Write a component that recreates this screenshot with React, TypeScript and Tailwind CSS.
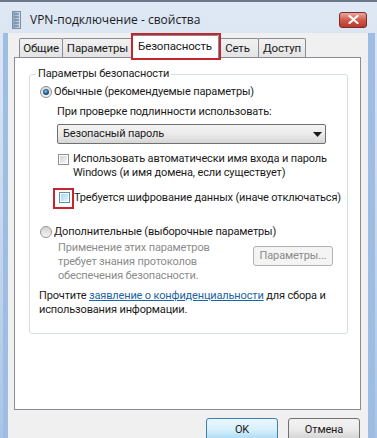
import React from "react";

const font = "font-['Roboto',sans-serif]";

const RadioOn = () => (
  <svg width="12" height="12" viewBox="0 0 12 12">
    <defs>
      <linearGradient id="ro" x1="0" y1="0" x2="0" y2="1">
        <stop offset="0" stopColor="#d9d9d9" />
        <stop offset="1" stopColor="#f7f7f7" />
      </linearGradient>
      <radialGradient id="rd" cx="45%" cy="40%" r="60%">
        <stop offset="0" stopColor="#9fd3f2" />
        <stop offset="0.5" stopColor="#2f72a8" />
        <stop offset="1" stopColor="#163e63" />
      </radialGradient>
    </defs>
    <circle cx="6" cy="6" r="5.5" fill="url(#ro)" stroke="#8d8d8d" />
    <circle cx="6" cy="6" r="3" fill="url(#rd)" />
  </svg>
);

const RadioOff = () => (
  <svg width="12" height="12" viewBox="0 0 12 12">
    <defs>
      <linearGradient id="rf" x1="0" y1="0" x2="0" y2="1">
        <stop offset="0" stopColor="#cfcfcf" />
        <stop offset="1" stopColor="#f6f6f6" />
      </linearGradient>
    </defs>
    <circle cx="6" cy="6" r="5.5" fill="url(#rf)" stroke="#979797" />
  </svg>
);

const Check = ({ hot }: { hot?: boolean }) => (
  <div className={`w-[11px] h-[11px] border p-[1px] bg-white ${hot ? "border-[#5d8fb6]" : "border-[#8f8f8f]"}`}>
    <div className={`w-full h-full bg-linear-to-br ${hot ? "from-[#a9d9f2] to-[#dff3fc]" : "from-[#d3d3d3] to-[#f8f8f8]"}`} />
  </div>
);

const Tab = ({ label, w, first }: { label: string; w: string; first?: boolean }) => (
  <div className={`${w} ${first ? "" : "-ml-px"} h-[19px] flex items-center justify-center border border-b-0 border-[#898c95] bg-linear-to-b from-[#f2f2f2] to-[#e3e3e3] rounded-t-[2px]`}>
    {label}
  </div>
);

export default function App() {
  return (
    <div className={`w-[377px] h-[438px] overflow-hidden flex flex-col bg-linear-to-b from-[#dfe8f4] via-[#c8d9ee] to-[#a9c4e6] border-t-2 border-[#6b7a8a] text-[11px] tracking-[-0.15px] leading-[14px] text-[#1a1a1a] whitespace-nowrap ${font}`}>
      {/* title bar */}
      <div className="h-[31px] shrink-0 flex items-center pl-[12px] pr-[10px] pt-[4px]">
        <svg width="9" height="18" viewBox="0 0 9 18">
          <defs>
            <linearGradient id="ic" x1="0" y1="0" x2="1" y2="0">
              <stop offset="0" stopColor="#8aa3bd" />
              <stop offset="1" stopColor="#d7e2ee" />
            </linearGradient>
          </defs>
          <rect x="0.5" y="0.5" width="8" height="17" fill="url(#ic)" stroke="#7b8fa6" />
          <path d="M2 3h5M2 6h5M2 9h5M2 12h5M2 15h5" stroke="#5b7391" strokeWidth="1" />
        </svg>
        <span className="ml-[9px] text-[12px] tracking-normal text-[#1b1b1b] font-['Open_Sans',sans-serif]">VPN-подключение - свойства</span>
        <div className="ml-auto w-[28px] h-[16px] rounded-[3px] border border-[#7a2e27] bg-linear-to-b from-[#e7a99f] via-[#cf5a4c] to-[#b93a2d] flex items-center justify-center">
          <svg width="11" height="9" viewBox="0 0 11 9">
            <path d="M1.5 1l8 7M9.5 1l-8 7" stroke="#ffffff" strokeWidth="2.2" strokeLinecap="round" />
          </svg>
        </div>
      </div>

      {/* client area */}
      <div className="flex-1 ml-[3px] mr-[2px] border-l-[5px] border-r-[7px] border-[#9ebde2] bg-[#f0f0f0] pl-[6px] pr-[7px] flex flex-col">
        <div className="h-[24px] flex items-end pl-[5px] text-[11.5px]">
          <Tab label="Общие" w="w-[44px]" first />
          <Tab label="Параметры" w="w-[71px]" />
          <div className="relative z-10 -mx-[2px] -mb-px w-[88px] h-[23px] flex items-start justify-center pt-[3px] border border-b-0 border-[#898c95] bg-white rounded-t-[2px]">
            Безопасность
            <div className="absolute -left-[1px] -right-[3px] -top-[3px] -bottom-[2px] border-2 border-[#c4262d]" />
          </div>
          <Tab label="Сеть" w="w-[43px]" />
          <Tab label="Доступ" w="w-[48px]" />
        </div>

        <div className="h-[353px] border border-[#898c95] bg-white pl-[14px] pr-[12px] pt-[16px]">
          <div className="relative border border-[#d5dfe5] rounded-[3px] pl-[10px] pr-[14px] pt-[10px] pb-[16px]">
            <div className="absolute -top-[8px] left-[6px] bg-white px-[2px]">Параметры безопасности</div>

            <div className="flex items-center gap-[2px]">
              <RadioOn />
              <span>Обычные (рекомендуемые параметры)</span>
            </div>

            <div className="ml-[17px]">
              <div className="mt-[6px]">При проверке подлинности использовать:</div>
              <div className="mt-[5px] w-[269px] h-[20px] flex items-center justify-between pl-[5px] pr-[3px] border border-[#707070] rounded-[2px] bg-linear-to-b from-[#f3f3f3] via-[#ebebeb] to-[#d6d6d6]">
                <span>Безопасный пароль</span>
                <svg width="9" height="5" viewBox="0 0 9 5">
                  <path d="M0 0h9L4.5 5z" fill="#1a1a1a" />
                </svg>
              </div>
              <div className="mt-[8px] flex items-start gap-[4px]">
                <div className="mt-[2px] ml-[1px]">
                  <Check />
                </div>
                <div>
                  Использовать автоматически имя входа и пароль
                  <br />
                  Windows (и имя домена, если существует)
                </div>
              </div>
              <div className="mt-[11px] flex items-start gap-[4px]">
                <div className="relative mt-[1px] ml-[2px]">
                  <Check hot />
                  <div className="absolute -left-[6px] -top-[4px] w-[21px] h-[21px] border-2 border-[#c4262d]" />
                </div>
                <div>Требуется шифрование данных (иначе отключаться)</div>
              </div>
            </div>

            <div className="mt-[20px] flex items-center gap-[2px]">
              <RadioOff />
              <span>Дополнительные (выборочные параметры)</span>
            </div>

            <div className="ml-[18px] mt-[2px] flex items-start justify-between">
              <div className="text-[#8c8c8c]">
                Применение этих параметров
                <br />
                требует знания протоколов
                <br />
                обеспечения безопасности.
              </div>
              <div className="mt-[5px] w-[80px] h-[20px] flex items-center justify-center border border-[#adb2b5] rounded-[3px] bg-[#f4f4f4] text-[#8a8a8a]">
                Параметры...
              </div>
            </div>

            <div className="mt-[6px] -ml-[1px]">
              Прочтите <span className="text-[#1c64a5] underline">заявление о конфиденциальности</span> для сбора и
              <br />
              использования информации.
            </div>
          </div>
        </div>

        <div className="mt-[8px] flex justify-end gap-[10px] pr-px">
          <div className="w-[72px] h-[23px] flex items-center justify-center border border-[#3c7fb1] rounded-[3px] bg-linear-to-b from-[#eaf6fd] via-[#d9f0fc] to-[#a7d9f5]">
            OK
          </div>
          <div className="w-[72px] h-[23px] flex items-center justify-center border border-[#707070] rounded-[3px] bg-linear-to-b from-[#f2f2f2] via-[#ebebeb] to-[#d0d0d0]">
            Отмена
          </div>
        </div>
      </div>
    </div>
  );
}
